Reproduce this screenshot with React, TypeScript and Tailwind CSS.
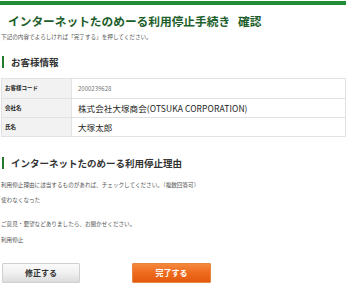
const font = {
  fontFamily: '"Noto Sans CJK JP", "Noto Sans", sans-serif',
};

const rows = [
  { label: "お客様コード", value: "2000239628", small: true },
  { label: "会社名", value: "株式会社大塚商会(OTSUKA CORPORATION)", small: false },
  { label: "氏名", value: "大塚太郎", small: false },
];

function Heading({ children }: { children: React.ReactNode }) {
  return (
    <div className="ml-[2px] flex items-center border-l-[2px] border-[#237a2c] pl-[7px] text-[9.5px] font-bold leading-[12px] text-[#333]">
      {children}
    </div>
  );
}

export default function App() {
  return (
    <div className="h-[283px] w-[348px] overflow-hidden bg-white" style={font}>
      {/* top rule */}
      <div className="mt-[1px] h-[4px] w-[346px] bg-[#1f8c36]" />

      <h1 className="mt-[9px] pl-[8px] text-[11.7px] font-bold leading-[14px] text-[#1d5e2b]">
        インターネットたのめーる利用停止手続き<span className="ml-[8px]">確認</span>
      </h1>

      <p className="mt-[5px] pl-[1px] text-[5.6px] leading-[8px] text-[#555]">
        下記の内容でよろしければ「完了する」を押してください。
      </p>

      <div className="mt-[15px]">
        <Heading>お客様情報</Heading>
      </div>

      {/* customer table */}
      <div className="ml-[1px] mt-[10px] w-[345px] border border-[#e2e2e2]">
        {rows.map((r, i) => (
          <div
            key={r.label}
            className={`flex h-[19px] ${i > 0 ? "border-t border-[#e2e2e2]" : ""}`}
          >
            <div className="flex w-[69px] items-center bg-[#f2f2f2] pl-[3px] text-[5.5px] font-bold text-[#222]">
              {r.label}
            </div>
            <div
              className={`flex flex-1 items-center border-l border-[#e2e2e2] pl-[6px] ${
                r.small
                  ? "text-[6px] text-[#777]"
                  : "text-[8.5px] tracking-[0.1px] text-[#222]"
              }`}
            >
              {r.value}
            </div>
          </div>
        ))}
      </div>

      <div className="mt-[20px]">
        <Heading>インターネットたのめーる利用停止理由</Heading>
      </div>

      <div className="pl-[1px] text-[5.6px] text-[#555]">
        <p className="mt-[12px] leading-[8px]">
          利用停止理由に該当するものがあれば、チェックしてください。（複数回答可）
        </p>
        <p className="mt-[7px] leading-[8px]">使わなくなった</p>
        <p className="mt-[16px] leading-[8px]">ご意見・要望などありましたら、お聞かせください。</p>
        <p className="mt-[8px] leading-[8px]">利用停止</p>
      </div>

      {/* buttons */}
      <div className="mt-[19px] flex gap-[52px] pl-[2px]">
        <button className="flex h-[20px] w-[78px] items-center justify-center rounded-[1px] border border-[#d0d0d0] bg-gradient-to-b from-[#fafafa] via-[#f0f0f0] to-[#dcdcdc] text-[8px] font-bold text-[#333]">
          修正する
        </button>
        <button className="flex h-[20px] w-[79px] items-center justify-center rounded-[1px] border border-[#e7843f] bg-gradient-to-b from-[#f5883c] via-[#ee6a1c] to-[#e45a0c] text-[8px] font-bold text-white">
          完了する
        </button>
      </div>
    </div>
  );
}
